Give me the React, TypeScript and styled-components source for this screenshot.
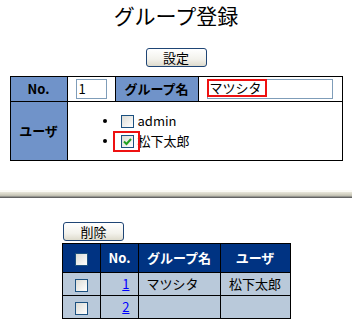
import React from "react";
import styled, { createGlobalStyle, css } from "styled-components";

const GlobalStyle = createGlobalStyle`
  html, body {
    margin: 0;
    padding: 0;
    background: #ffffff;
  }
  body {
    font-family: "DejaVu Sans", "Noto Sans CJK JP", sans-serif;
    font-size: 13px;
    color: #000000;
  }
`;

const Page = styled.div`
  width: 352px;
  padding-top: 3px;
  display: flex;
  flex-direction: column;
  align-items: center;
`;

const Title = styled.h1`
  margin: 0;
  font-family: "Noto Sans CJK JP", sans-serif;
  font-size: 21px;
  font-weight: normal;
  line-height: 24px;
`;

const Button = styled.button`
  width: 61px;
  height: 19px;
  padding: 0;
  border: 1px solid #1f4575;
  border-radius: 3px;
  background: linear-gradient(#ffffff, #f3f2ec 60%, #dedbcd);
  font-family: "Noto Sans CJK JP", sans-serif;
  font-size: 13px;
  line-height: 17px;
  color: #000;
`;

const ButtonRow = styled.div<{ $top: number; $left?: boolean }>`
  display: flex;
  justify-content: ${(p) => (p.$left ? "flex-start" : "center")};
  margin-top: ${(p) => p.$top}px;
  width: ${(p) => (p.$left ? "228px" : "auto")};
  padding-left: ${(p) => (p.$left ? "1px" : "0")};
  box-sizing: border-box;
`;

const Table = styled.table<{ $top: number; $width: number }>`
  border-collapse: collapse;
  margin-top: ${(p) => p.$top}px;
  width: ${(p) => p.$width}px;
  table-layout: fixed;
`;

const Col = styled.col<{ $w: number }>`
  width: ${(p) => p.$w}px;
`;

const Cell = styled.td<{ $head?: "light" | "dark"; $align?: string; $h?: number }>`
  border: 1px solid #000;
  padding: 0 8px;
  height: ${(p) => p.$h ?? 22}px;
  text-align: ${(p) => p.$align ?? "left"};
  vertical-align: middle;
  font-family: "Noto Sans CJK JP", sans-serif;
  font-size: 13px;
  line-height: 16px;
  white-space: nowrap;
  background: #b9c9da;
  ${(p) =>
    p.$head === "light" &&
    css`
      background: #7093c9;
      font-weight: bold;
      text-align: center;
    `}
  ${(p) =>
    p.$head === "dark" &&
    css`
      background: #003382;
      color: #ffffff;
      font-weight: bold;
      text-align: center;
    `}
`;

const FormCell = styled(Cell)`
  background: #ffffff;
`;

const TextBox = styled.div<{ $w: number }>`
  width: ${(p) => p.$w}px;
  height: 20px;
  box-sizing: border-box;
  border: 1px solid #7f9db9;
  background: #fff;
  display: flex;
  align-items: center;
  padding-left: 2px;
  font-family: "Noto Sans CJK JP", sans-serif;
  font-size: 13px;
`;

const MarkedText = styled.span`
  margin-left: -3px;
  margin-top: -2px;
  height: 18px;
  box-sizing: border-box;
  border: 2px solid #ee1111;
  padding: 0 3px 0 1px;
  display: flex;
  align-items: center;
`;

const UserList = styled.ul`
  list-style: none;
  margin: 0;
  padding: 0 0 0 27px;
  display: flex;
  flex-direction: column;
`;

const UserItem = styled.li`
  display: flex;
  align-items: center;
  height: 20px;
  &::before {
    content: "";
    width: 4px;
    height: 4px;
    border-radius: 50%;
    background: #000;
    margin-right: 14px;
  }
`;

const BoxWrap = styled.span`
  position: relative;
  display: inline-flex;
  vertical-align: middle;
`;

const Box = styled.span`
  width: 13px;
  height: 13px;
  box-sizing: border-box;
  border: 1px solid #1c5180;
  background: linear-gradient(135deg, #dcdcd6, #ffffff);
  display: inline-flex;
  align-items: center;
  justify-content: center;
`;

const Highlight = styled.span`
  position: absolute;
  left: -8px;
  top: -4px;
  width: 27px;
  height: 21px;
  box-sizing: border-box;
  border: 2px solid #ee1111;
`;

const Label = styled.span`
  margin-left: 4px;
`;

const Separator = styled.div`
  align-self: stretch;
  margin-top: 29px;
  height: 8px;
  background: linear-gradient(#fbfaf5 0, #fbfaf5 2px, #e8e6da 2px, #d7d5c6 4px, #bdbcae 6px, #707070 7px, #555 8px);
`;

const Link = styled.a`
  color: #0000ff;
  text-decoration: underline;
`;

const Checkbox = ({ checked, marked }: { checked?: boolean; marked?: boolean }) => (
  <BoxWrap>
    <Box>
      {checked && (
        <svg width="9" height="9" viewBox="0 0 9 9">
          <path d="M1 4.5 L3.5 7 L8 2" stroke="#21a121" strokeWidth="2" fill="none" />
        </svg>
      )}
    </Box>
    {marked && <Highlight />}
  </BoxWrap>
);

const rows = [
  { no: "1", name: "マツシタ", user: "松下太郎" },
  { no: "2", name: "", user: "" },
];

export default function App() {
  return (
    <>
      <GlobalStyle />
      <Page>
        <Title>グループ登録</Title>
        <ButtonRow $top={21}>
          <Button>設定</Button>
        </ButtonRow>
        <Table $top={9} $width={332}>
          <colgroup>
            <Col $w={57} />
            <Col $w={48} />
            <Col $w={83} />
            <Col $w={144} />
          </colgroup>
          <tbody>
            <tr>
              <Cell $head="light" $h={24}>No.</Cell>
              <FormCell $h={24}>
                <TextBox $w={31}>1</TextBox>
              </FormCell>
              <Cell $head="light" $h={24}>グループ名</Cell>
              <FormCell $h={24}>
                <TextBox $w={126}>
                  <MarkedText>マツシタ</MarkedText>
                </TextBox>
              </FormCell>
            </tr>
            <tr>
              <Cell $head="light" $h={58}>ユーザ</Cell>
              <FormCell $h={58} colSpan={3}>
                <UserList>
                  <UserItem>
                    <Checkbox />
                    <Label>admin</Label>
                  </UserItem>
                  <UserItem>
                    <Checkbox checked marked />
                    <Label>松下太郎</Label>
                  </UserItem>
                </UserList>
              </FormCell>
            </tr>
          </tbody>
        </Table>
        <Separator />
        <ButtonRow $top={24} $left>
          <Button>削除</Button>
        </ButtonRow>
        <Table $top={2} $width={228}>
          <colgroup>
            <Col $w={38} />
            <Col $w={38} />
            <Col $w={82} />
            <Col $w={70} />
          </colgroup>
          <tbody>
            <tr>
              <Cell $head="dark" $h={28}>
                <Checkbox />
              </Cell>
              <Cell $head="dark" $h={28}>No.</Cell>
              <Cell $head="dark" $h={28}>グループ名</Cell>
              <Cell $head="dark" $h={28}>ユーザ</Cell>
            </tr>
            {rows.map((r) => (
              <tr key={r.no}>
                <Cell $align="center">
                  <Checkbox />
                </Cell>
                <Cell $align="right">
                  <Link href="#">{r.no}</Link>
                </Cell>
                <Cell>{r.name}</Cell>
                <Cell $align="center">{r.user}</Cell>
              </tr>
            ))}
          </tbody>
        </Table>
      </Page>
    </>
  );
}
